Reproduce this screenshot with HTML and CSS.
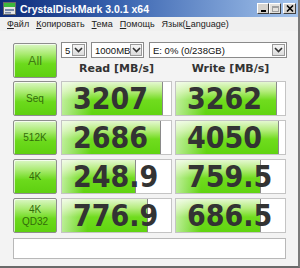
FILE: index.html
```html
<!DOCTYPE html>
<html>
<head>
<meta charset="utf-8">
<link rel="stylesheet" href="styles.css">
</head>
<body>
<div class="win">
  <div class="titlebar">
    <svg class="appicon" width="13" height="13" viewBox="0 0 13 13">
      <rect x="0.5" y="0.5" width="12" height="12" fill="#e6e6e6" stroke="#6a6a6a"/>
      <rect x="1" y="1" width="11" height="4" fill="#3cb83c"/>
      <rect x="2" y="7" width="9" height="2" fill="#7a8aa8"/>
      <rect x="2" y="10" width="6" height="1.5" fill="#7a8aa8"/>
    </svg>
    <span class="title">CrystalDiskMark 3.0.1 x64</span>
    <div class="wbtns">
      <span class="wbtn min"><i></i></span>
      <span class="wbtn max dis"><i></i></span>
      <span class="wbtn close">
        <svg width="8" height="7" viewBox="0 0 8 7"><path d="M1 0.5 L7 6.5 M7 0.5 L1 6.5" stroke="#000" stroke-width="1.6"/></svg>
      </span>
    </div>
  </div>
  <div class="menubar">
    <span class="mi"><u>Ф</u>айл</span>
    <span class="mi"><u>К</u>опировать</span>
    <span class="mi"><u>Т</u>ема</span>
    <span class="mi"><u>П</u>омощь</span>
    <span class="mi">Язык(<u>L</u>anguage)</span>
  </div>
  <div class="client">
    <div class="top">
      <div class="btn all">All</div>
      <div class="topright">
        <div class="combos">
          <div class="combo c5"><span class="ct">5</span><span class="dd"><svg width="9" height="6" viewBox="0 0 9 6"><path d="M1 1 L4.5 4.5 L8 1" fill="none" stroke="#333" stroke-width="1.6"/></svg></span></div>
          <div class="combo cmb"><span class="ct">1000MB</span><span class="dd"><svg width="9" height="6" viewBox="0 0 9 6"><path d="M1 1 L4.5 4.5 L8 1" fill="none" stroke="#333" stroke-width="1.6"/></svg></span></div>
          <div class="combo cdrv"><span class="ct">E: 0% (0/238GB)</span><span class="dd"><svg width="9" height="6" viewBox="0 0 9 6"><path d="M1 1 L4.5 4.5 L8 1" fill="none" stroke="#333" stroke-width="1.6"/></svg></span></div>
        </div>
        <div class="heads">
          <div class="head">Read [MB/s]</div>
          <div class="head">Write [MB/s]</div>
        </div>
      </div>
    </div>
    <div class="rows">
      <div class="row">
        <div class="btn lbl">Seq</div>
        <div class="cell"><div class="bar" style="width:101px"></div><span class="num">3207</span></div>
        <div class="cell"><div class="bar" style="width:101px"></div><span class="num">3262</span></div>
      </div>
      <div class="row">
        <div class="btn lbl">512K</div>
        <div class="cell"><div class="bar" style="width:99px"></div><span class="num">2686</span></div>
        <div class="cell"><div class="bar" style="width:103px"></div><span class="num">4050</span></div>
      </div>
      <div class="row">
        <div class="btn lbl">4K</div>
        <div class="cell"><div class="bar" style="width:74px"></div><span class="num">248.9</span></div>
        <div class="cell"><div class="bar" style="width:85px"></div><span class="num">759.5</span></div>
      </div>
      <div class="row">
        <div class="btn lbl two">4K<br>QD32</div>
        <div class="cell"><div class="bar" style="width:86px"></div><span class="num">776.9</span></div>
        <div class="cell"><div class="bar" style="width:85px"></div><span class="num">686.5</span></div>
      </div>
    </div>
    <div class="comment"></div>
  </div>
</div>
</body>
</html>
```
FILE: styles.css
```css
* { box-sizing: border-box; }
html, body { margin: 0; padding: 0; background: #ffffff; }
body { width: 300px; height: 268px; overflow: hidden; font-family: "Liberation Sans", Arial, sans-serif; }

.win {
  width: 300px;
  height: 268px;
  background: #f1f1f1;
  border-right: 2px solid #7a7a7a;
  border-bottom: 2px solid #6a6a6a;
  display: flex;
  flex-direction: column;
}

.titlebar {
  height: 17px;
  background: linear-gradient(to right, #0c2a78 0%, #3a64b0 40%, #a4c4ec 100%);
  display: flex;
  align-items: center;
  padding-left: 3px;
  padding-right: 2px;
}
.appicon { flex: none; }
.title {
  color: #ffffff;
  font-weight: bold;
  font-size: 10.5px;
  margin-left: 4px;
  flex: 1;
  white-space: nowrap;
}
.wbtns { display: flex; align-items: center; gap: 0; }
.wbtn {
  width: 12px;
  height: 11px;
  background: #d6d3ce;
  border: 1px solid;
  border-color: #ffffff #404040 #404040 #ffffff;
  display: flex;
  align-items: center;
  justify-content: center;
}
.wbtn.min i { width: 5px; height: 2px; background: #000; margin-top: 5px; }
.wbtn.max i { width: 7px; height: 6px; border: 1px solid #a0a0a0; border-top-width: 2px; }
.wbtn.dis { background: #e4e2de; }
.wbtn.close { margin-left: 2px; width: 13px; }

.menubar {
  height: 14px;
  display: flex;
  align-items: center;
  padding-left: 7px;
  gap: 7px;
  font-size: 9px;
  color: #222;
  background: #f0f0f0;
}
.mi { white-space: nowrap; }
.mi u { text-decoration: underline; }

.client {
  flex: 1;
  padding: 11px 0 0 13px;
  background: #f3f3f3;
}

.top { display: flex; gap: 4px; }
.btn {
  border: 1px solid #8e8e8e;
  border-radius: 2px;
  background: linear-gradient(to bottom, #dcf7c6 0%, #aaeb72 30%, #6cda1c 60%, #5ed010 100%);
  color: #336b0a;
  display: flex;
  align-items: center;
  justify-content: center;
  text-align: center;
  box-shadow: inset 1px 1px 0 rgba(255,255,255,0.7);
}
.all {
  width: 44px;
  height: 35px;
  margin-top: 1px;
  font-size: 12.5px;
  color: #3f7a12;
}
.topright { display: flex; flex-direction: column; }
.combos { display: flex; gap: 4px; height: 16px; }
.combo {
  height: 16px;
  background: #ffffff;
  border: 1px solid #8a8a8a;
  display: flex;
  align-items: center;
  justify-content: space-between;
  padding: 1px;
  font-size: 9.5px;
  color: #111;
}
.ct { padding-left: 2px; white-space: nowrap; }
.dd {
  width: 13px;
  height: 12px;
  background: linear-gradient(to bottom, #f6f6f6, #dcdcdc);
  border: 1px solid #9a9a9a;
  display: flex;
  align-items: center;
  justify-content: center;
}
.c5 { width: 26px; }
.cmb { width: 53px; }
.cdrv { width: 138px; margin-left: 1px; }

.heads { display: flex; gap: 3px; margin-top: 3px; }
.head {
  width: 111px;
  text-align: center;
  font-family: "DejaVu Sans", sans-serif;
  font-weight: bold;
  font-size: 11px;
  color: #333;
  line-height: 16px;
}

.rows { display: flex; flex-direction: column; gap: 4px; margin-top: 3px; }
.row { display: flex; gap: 4px; }
.row .cell + .cell { margin-left: -1px; }
.lbl { width: 44px; height: 35px; font-size: 10px; line-height: 12px; }

.cell {
  width: 111px;
  height: 35px;
  background: #ffffff;
  border: 1px solid #c4c4c4;
  position: relative;
  display: flex;
  align-items: center;
  justify-content: flex-start;
  padding-left: 11px;
}
.bar {
  position: absolute;
  left: 0;
  top: 0;
  bottom: 0;
  border-right: 1px solid #8a8a8a;
  background:
    linear-gradient(to right, rgba(255,255,255,0.55) 0%, rgba(255,255,255,0) 30%),
    linear-gradient(to bottom, #e4f8d0 0%, #b4ec7c 28%, #70dc1e 55%, #60d410 100%);
}
.num {
  position: relative;
  font-family: "DejaVu Sans Condensed", "DejaVu Sans", sans-serif;
  font-stretch: condensed;
  font-weight: bold;
  font-size: 30px;
  color: #333333;
  line-height: 33px;
  white-space: nowrap;
}

.comment {
  width: 273px;
  height: 21px;
  margin-top: 5px;
  background: #ffffff;
  border: 1px solid #b8b8b8;
}
```
